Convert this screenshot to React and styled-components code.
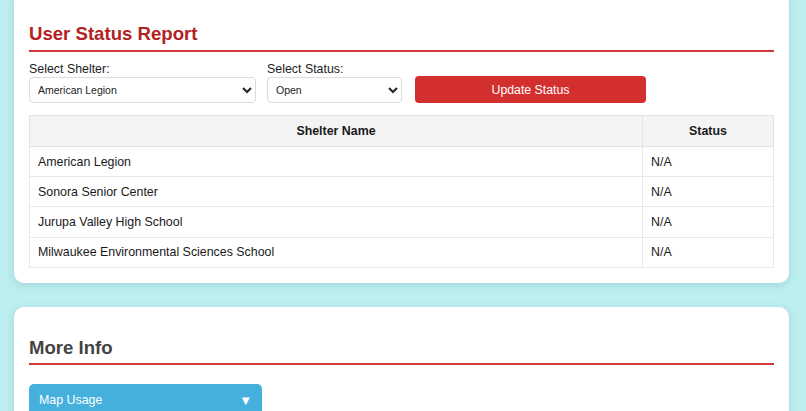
import React from "react";
import styled, { createGlobalStyle } from "styled-components";

const Global = createGlobalStyle`
  html, body { margin: 0; padding: 0; }
  body {
    background: #bdeef0;
    font-family: "Liberation Sans", Arial, sans-serif;
    color: #222;
    overflow: hidden;
  }
`;

const Page = styled.div`
  display: flex;
  flex-direction: column;
  gap: 24px;
  padding: 0 17px 0 14px;
  margin-top: -7px;
`;

const Card = styled.section`
  background: #fff;
  border-radius: 10px;
  box-shadow: 0 2px 8px rgba(0, 80, 90, 0.15);
  padding: 29px 15px 15px;
`;

const Heading = styled.h2`
  margin: 0 0 ${(p) => p.$gap}px;
  font-size: 18.6px;
  line-height: 23px;
  font-weight: bold;
  color: ${(p) => p.$color};
  padding-bottom: ${(p) => p.$pad}px;
  border-bottom: 2px solid #d13a3a;
`;

const FormRow = styled.div`
  display: flex;
  align-items: flex-end;
  gap: 11px;
`;

const Field = styled.label`
  display: flex;
  flex-direction: column;
  font-size: 12.4px;
  line-height: 15px;
  color: #222;
  width: ${(p) => p.$w}px;
`;

const Select = styled.select`
  height: 26px;
  border: 1px solid #dcdcdc;
  border-radius: 4px;
  background: #fff;
  font-family: "Liberation Sans", Arial, sans-serif;
  font-size: 10.5px;
  color: #222;
  padding: 0 4px;
`;

const Button = styled.button`
  width: 231px;
  height: 27px;
  margin-left: 2px;
  background: #d32f2f;
  color: #fff;
  border: none;
  border-radius: 4px;
  font-family: "Liberation Sans", Arial, sans-serif;
  font-size: 12.3px;
`;

const Table = styled.table`
  width: 100%;
  margin-top: 12px;
  border-collapse: collapse;
  font-size: 12.4px;
  color: #1a1a1a;
`;

const Th = styled.th`
  box-sizing: border-box;
  background: #f4f4f4;
  border: 1px solid #e4e4e4;
  font-weight: bold;
  height: 31px;
  padding: 0 8px;
  text-align: center;
  width: ${(p) => (p.$w ? p.$w + "px" : "auto")};
`;

const Td = styled.td`
  border: 1px solid #e8e8e8;
  height: 29.2px;
  padding: 0 8px;
  text-align: left;
`;

const Accordion = styled.button`
  width: 233px;
  height: 33px;
  display: flex;
  align-items: center;
  justify-content: space-between;
  padding: 0 10px;
  background: #45b0de;
  color: #fff;
  border: none;
  border-radius: 5px 5px 0 0;
  font-family: "Liberation Sans", Arial, sans-serif;
  font-size: 12.4px;
`;

const Arrow = styled.span`
  font-size: 13px;
`;

const Spacer = styled.div`
  height: 60px;
`;

const rows = [
  "American Legion",
  "Sonora Senior Center",
  "Jurupa Valley High School",
  "Milwaukee Environmental Sciences School",
];

export default function App() {
  return (
    <>
      <Global />
      <Page>
        <Card>
          <Heading $color="#b22222" $gap={10} $pad={5}>User Status Report</Heading>
          <FormRow>
            <Field $w={227}>
              Select Shelter:
              <Select defaultValue="American Legion">
                {rows.map((r) => (
                  <option key={r}>{r}</option>
                ))}
              </Select>
            </Field>
            <Field $w={135}>
              Select Status:
              <Select defaultValue="Open">
                <option>Open</option>
                <option>Closed</option>
                <option>Full</option>
              </Select>
            </Field>
            <Button>Update Status</Button>
          </FormRow>
          <Table>
            <thead>
              <tr>
                <Th>Shelter Name</Th>
                <Th $w={131}>Status</Th>
              </tr>
            </thead>
            <tbody>
              {rows.map((r) => (
                <tr key={r}>
                  <Td>{r}</Td>
                  <Td>N/A</Td>
                </tr>
              ))}
            </tbody>
          </Table>
        </Card>
        <Card>
          <Heading $color="#444" $gap={19} $pad={4}>More Info</Heading>
          <Accordion>
            <span>Map Usage</span>
            <Arrow>▼</Arrow>
          </Accordion>
          <Spacer />
        </Card>
      </Page>
    </>
  );
}
